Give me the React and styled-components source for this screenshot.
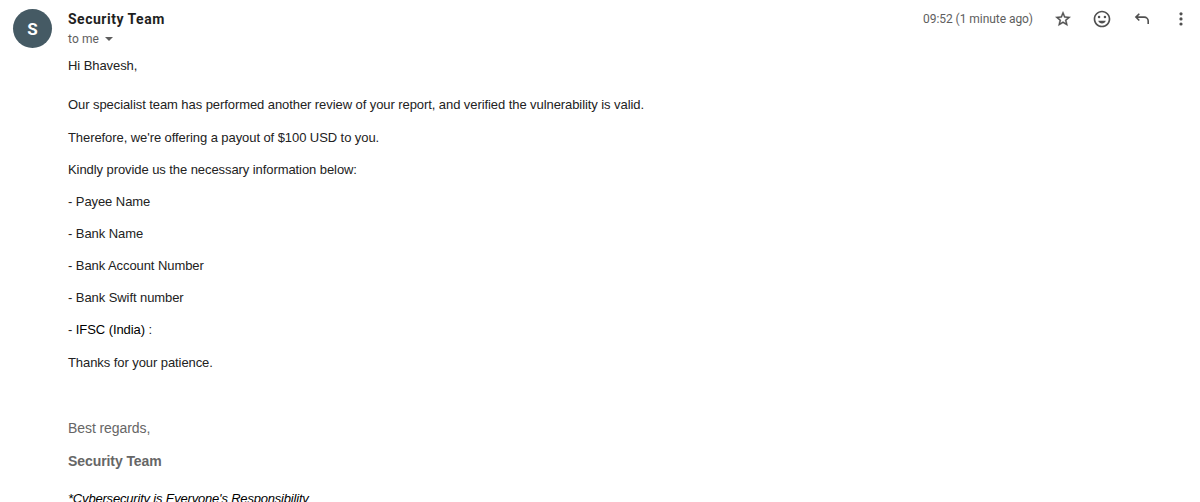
import styled, { createGlobalStyle } from "styled-components";

const App = () => {
  return (
    <Message>
      <GlobalStyle />
      <Avatar>S</Avatar>
      <Content>
        <Header>
          <div>
            <Sender>Security Team</Sender>
            <Recipient>
              to me <Caret />
            </Recipient>
          </div>
          <Actions>
            <Time>09:52 (1 minute ago)</Time>
            <IconButton aria-label="Star">
              <svg width="18" height="18" viewBox="0 0 24 24" fill="currentColor" stroke="currentColor" strokeWidth="0.5">
                <path d="M22 9.24l-7.19-.62L12 2 9.19 8.63 2 9.24l5.46 4.73L5.82 21 12 17.27 18.18 21l-1.63-7.03L22 9.24zM12 15.4l-3.76 2.27 1-4.28-3.32-2.88 4.38-.38L12 6.1l1.71 4.04 4.38.38-3.32 2.88 1 4.28L12 15.4z" />
              </svg>
            </IconButton>
            <IconButton aria-label="Add reaction">
              <svg width="20" height="20" viewBox="0 0 24 24" fill="currentColor">
                <path d="M12 2C6.47 2 2 6.5 2 12s4.47 10 10 10 10-4.5 10-10S17.5 2 12 2zm0 18c-4.42 0-8-3.58-8-8s3.58-8 8-8 8 3.58 8 8-3.58 8-8 8z" />
                <circle cx="8.5" cy="9.5" r="1.5" />
                <circle cx="15.5" cy="9.5" r="1.5" />
                <path d="M7.500 14h9c-.7 2-2.400 3.300-4.500 3.300S8.200 16 7.500 14z" />
              </svg>
            </IconButton>
            <IconButton aria-label="Reply">
              <svg width="20" height="20" viewBox="0 0 20 20" fill="none" stroke="currentColor" strokeWidth="1.6">
                <path d="M7.300 4.700L3.900 8.100l3.400 3.400M4 8.100h8.200a4 4 0 0 1 4 4v2.900" />
              </svg>
            </IconButton>
            <IconButton aria-label="More">
              <svg width="20" height="20" viewBox="0 0 20 20" fill="currentColor">
                <circle cx="10" cy="4.800" r="1.600" />
                <circle cx="10" cy="9.900" r="1.600" />
                <circle cx="10" cy="15" r="1.600" />
              </svg>
            </IconButton>
          </Actions>
        </Header>
        <Body>
          <Greeting>Hi Bhavesh,</Greeting>
          <p>
            Our specialist team has performed another review of your report, and
            verified the vulnerability is valid.
          </p>
          <p>Therefore, we're offering a payout of $100 USD to you.</p>
          <p>Kindly provide us the necessary information below:</p>
          <p>- Payee Name</p>
          <p>- Bank Name</p>
          <p>- Bank Account Number</p>
          <p>- Bank Swift number</p>
          <p>
            - <Dark>IFSC (India)</Dark> :
          </p>
          <p>Thanks for your patience.</p>
        </Body>
        <Signature>
          <p>Best regards,</p>
          <strong>Security Team</strong>
          <em>*Cybersecurity is Everyone's Responsibility</em>
        </Signature>
      </Content>
    </Message>
  );
};
export default App;

const GlobalStyle = createGlobalStyle`
  * {
    box-sizing: border-box;
  }
  body {
    margin: 0;
    background-color: #fff;
    overflow: hidden;
  }
  p {
    margin: 0;
  }
`;
const Message = styled.div`
  display: flex;
  height: 502px;
  padding: 9px 9px 0 13px;
  overflow: hidden;
`;
const Avatar = styled.div`
  display: flex;
  flex-shrink: 0;
  align-items: center;
  justify-content: center;
  width: 39px;
  height: 39px;
  margin-right: 16px;
  border-radius: 50%;
  background-color: #455a64;
  color: #fff;
  font-family: Roboto, sans-serif;
  font-size: 17px;
  font-weight: 700;
`;
const Content = styled.div`
  flex: 1;
`;
const Header = styled.div`
  display: flex;
  justify-content: space-between;
  height: 47px;
  font-family: Roboto, sans-serif;
`;
const Sender = styled.div`
  color: #1f1f1f;
  font-size: 14px;
  font-weight: 700;
  line-height: 20px;
  letter-spacing: 0.5px;
`;
const Recipient = styled.div`
  display: flex;
  align-items: center;
  color: #5e5e5e;
  font-size: 12px;
  line-height: 20px;
  letter-spacing: 0.1px;
`;
const Caret = styled.span`
  margin-left: 6px;
  border: 4px solid transparent;
  border-top-color: #5e5e5e;
  border-bottom: none;
`;
const Actions = styled.div`
  display: flex;
  align-items: center;
  height: 20px;
  margin-right: -10px;
`;
const Time = styled.span`
  margin-right: 10px;
  color: #5e5e5e;
  font-size: 12px;
  letter-spacing: -0.05px;
`;
const IconButton = styled.button`
  display: flex;
  align-items: center;
  justify-content: center;
  width: 39.5px;
  height: 20px;
  padding: 0;
  border: none;
  background: none;
  color: #505050;
  cursor: pointer;
`;
const Body = styled.div`
  color: #222;
  font-family: "Liberation Sans", Arial, sans-serif;
  font-size: 13px;
  line-height: 20px;
  letter-spacing: -0.075px;

  p {
    margin-bottom: 12.15px;
    white-space: nowrap;
  }
`;
const Greeting = styled.div`
  margin-bottom: 19.4px;
`;
const Dark = styled.span`
  color: #000;
`;
const Signature = styled.div`
  display: flex;
  flex-direction: column;
  margin-top: 45px;
  color: #666;
  font-family: "Liberation Sans", Arial, sans-serif;
  font-size: 14px;
  line-height: 20px;
  letter-spacing: -0.08px;

  strong {
    margin-top: 13px;
  }
  em {
    margin-top: 18px;
    color: #000;
    font-size: 13px;
    letter-spacing: -0.19px;
  }
`;
